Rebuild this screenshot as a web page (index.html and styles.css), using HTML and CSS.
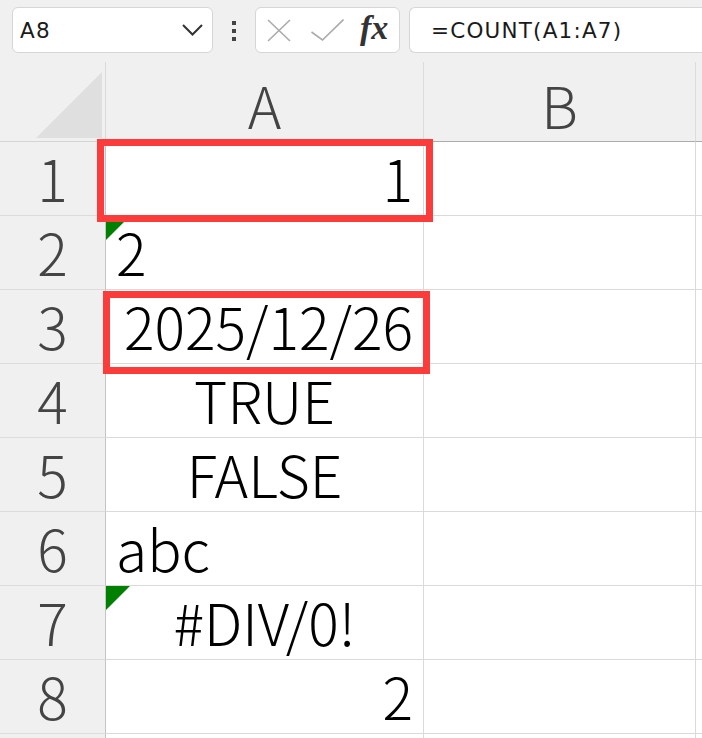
FILE: index.html
```html
<!DOCTYPE html>
<html lang="zh">
<head>
<meta charset="utf-8">
<title>Sheet</title>
<link rel="stylesheet" href="styles.css">
</head>
<body>
<div class="toolbar">
  <div class="namebox">
    <span class="name">A8</span>
    <svg class="chev" width="21" height="12" viewBox="0 0 21 12"><path d="M1 1 L10.5 10.5 L20 1" fill="none" stroke="#333" stroke-width="2"/></svg>
  </div>
  <div class="dots"><i></i><i></i><i></i></div>
  <div class="funcs">
    <svg class="ico-x" width="24" height="23" viewBox="0 0 24 23"><path d="M1 1 L23 22 M23 1 L1 22" stroke="#ababab" stroke-width="1.6" fill="none"/></svg>
    <svg class="ico-ok" width="33" height="22" viewBox="0 0 33 22"><path d="M0.5 13 L11.5 21 L32.5 0.5" stroke="#ababab" stroke-width="1.6" fill="none"/></svg>
    <span class="fx">fx</span>
  </div>
  <div class="formula">=COUNT(A1:A7)</div>
</div>
<div class="sheet">
  <div class="corner"><div class="tri"></div></div>
  <div class="colhdr">A</div>
  <div class="colhdr">B</div>
  <div class="colhdr last"></div>

  <div class="rowhdr">1</div>
  <div class="cell right">1<div class="mark mark1"></div></div>
  <div class="cell"></div>
  <div class="cell last"></div>

  <div class="rowhdr">2</div>
  <div class="cell flag">2</div>
  <div class="cell"></div>
  <div class="cell last"></div>

  <div class="rowhdr">3</div>
  <div class="cell right">2025/12/26<div class="mark mark2"></div></div>
  <div class="cell"></div>
  <div class="cell last"></div>

  <div class="rowhdr">4</div>
  <div class="cell center">TRUE</div>
  <div class="cell"></div>
  <div class="cell last"></div>

  <div class="rowhdr">5</div>
  <div class="cell center">FALSE</div>
  <div class="cell"></div>
  <div class="cell last"></div>

  <div class="rowhdr">6</div>
  <div class="cell">abc</div>
  <div class="cell"></div>
  <div class="cell last"></div>

  <div class="rowhdr">7</div>
  <div class="cell center flag">#DIV/0!</div>
  <div class="cell"></div>
  <div class="cell last"></div>

  <div class="rowhdr">8</div>
  <div class="cell right">2</div>
  <div class="cell"></div>
  <div class="cell last"></div>

  <div class="rowhdr"></div>
  <div class="cell"></div>
  <div class="cell"></div>
  <div class="cell last"></div>
</div>
</body>
</html>
```
FILE: styles.css
```css
* { box-sizing: border-box; }
html, body { margin: 0; padding: 0; }
body {
  width: 702px;
  height: 738px;
  overflow: hidden;
  background: #f0f0f0;
  font-family: "Noto Sans CJK SC", "Noto Sans", sans-serif;
}

.toolbar {
  height: 62px;
  display: flex;
  align-items: flex-start;
  padding: 7px 0 0 12px;
  overflow: hidden;
}
.namebox {
  width: 201px;
  height: 46px;
  background: #fff;
  border: 1px solid #d6d6d6;
  border-radius: 6px;
  display: flex;
  align-items: center;
  justify-content: space-between;
  padding: 0 9px 0 7px;
}
.name, .formula {
  font-family: "DejaVu Sans", sans-serif;
  font-size: 21.5px;
  letter-spacing: 1.2px;
  color: #1a1a1a;
}
.dots {
  margin-left: 19px;
  width: 5px;
  padding-top: 14px;
  display: flex;
  flex-direction: column;
  gap: 4px;
}
.dots i {
  display: block;
  width: 4px;
  height: 4px;
  background: #444;
}
.funcs {
  margin-left: 18px;
  width: 145px;
  height: 46px;
  background: #fff;
  border: 1px solid #d6d6d6;
  border-radius: 6px;
  display: flex;
  align-items: center;
  padding-left: 11px;
}
.ico-x { margin-top: 1px; }
.ico-ok { margin-left: 20px; }
.fx {
  margin-left: 16px;
  font-family: "Liberation Serif", serif;
  font-style: italic;
  font-weight: bold;
  font-size: 34px;
  color: #333;
  line-height: 1;
  margin-top: -5px;
}
.formula {
  margin-left: 9px;
  flex: 1;
  height: 46px;
  background: #fff;
  border: 1px solid #d6d6d6;
  border-right: none;
  border-radius: 6px 0 0 6px;
  display: flex;
  align-items: center;
  padding-left: 21px;
}

.sheet {
  display: grid;
  grid-template-columns: 106px 318px 272px 1fr;
  grid-template-rows: 80px repeat(9, 74px);
  font-size: 57px;
  font-weight: 300;
}
.corner {
  position: relative;
  border-right: 1px solid #dadada;
  border-bottom: 1px solid #d4d4d4;
}
.tri {
  position: absolute;
  left: 36px;
  top: 10px;
  width: 66px;
  height: 66px;
  background: #dfdfdf;
  clip-path: polygon(100% 0, 100% 100%, 0 100%);
}
.colhdr {
  display: flex;
  align-items: flex-end;
  justify-content: center;
  border-right: 1px solid #dcdcdc;
  border-bottom: 1px solid #ababab;
  color: #444;
  line-height: 1;
  padding-bottom: 8px;
}
.rowhdr {
  display: flex;
  align-items: flex-end;
  justify-content: center;
  border-right: 1px solid #c4c4c4;
  border-bottom: 1px solid #dcdcdc;
  color: #444;
  line-height: 1;
  padding-bottom: 9px;
}
.cell {
  position: relative;
  background: #fff;
  border-right: 1px solid #dadada;
  border-bottom: 1px solid #dadada;
  display: flex;
  align-items: flex-end;
  line-height: 1;
  color: #000;
  padding: 0 10px 9px;
  white-space: nowrap;
}
.cell.right { justify-content: flex-end; }
.cell.center { justify-content: center; }
.last { border-right: none; }
.flag::before {
  content: "";
  position: absolute;
  left: 0;
  top: 0;
  width: 24px;
  height: 24px;
  background: #008000;
  clip-path: polygon(0 0, 100% 0, 0 100%);
}
.mark {
  position: absolute;
  z-index: 2;
  border: 7px solid #fc3b3b;
}
.mark1 { left: -9px; top: -3px; width: 336px; height: 83px; }
.mark2 { left: -3px; top: 1px; width: 327px; height: 83px; }
```
